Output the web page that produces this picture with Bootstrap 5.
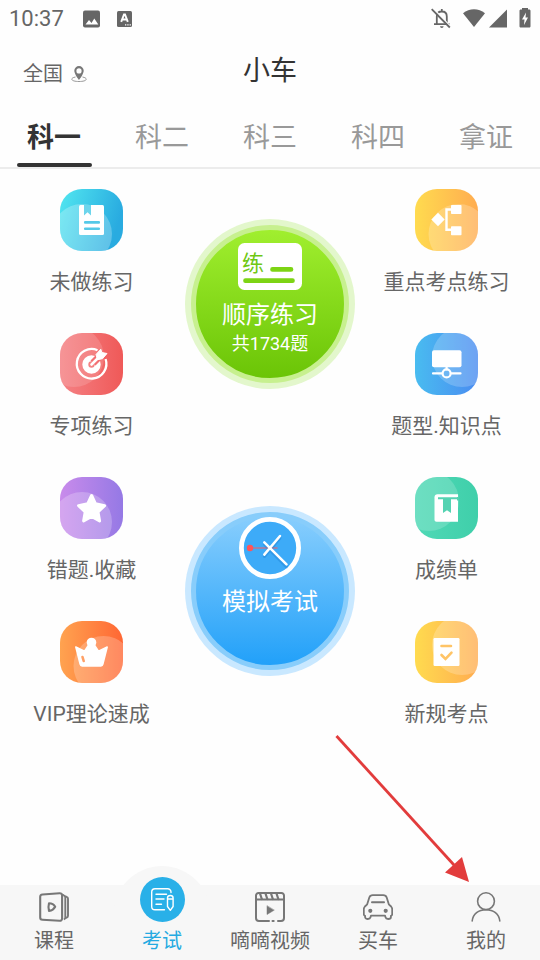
<!DOCTYPE html>
<html lang="zh-CN">
<head>
<meta charset="utf-8">
<meta name="viewport" content="width=device-width, initial-scale=1">
<title>小车</title>
<link href="https://cdn.jsdelivr.net/npm/bootstrap@5.3.0/dist/css/bootstrap.min.css" rel="stylesheet">
<style>
  body { font-family: Roboto, "Noto Sans CJK SC", sans-serif; background: #fefefe; color: #666; }
  a { color: inherit; text-decoration: none; }
  svg { display: block; flex: none; }

  .status-bar { height: 37px; padding: 0 9px; font-size: 22px; line-height: 37px; }
  .app-header { height: 69px; padding: 0 23px; }
  .app-header h1 { font-size: 27px; line-height: 64px; margin-bottom: 2px; color: #333; font-weight: 400; }
  .side { flex: 1 1 0; }
  .region { font-size: 20px; line-height: 28px; margin-top: 4px; }

  .subjects { border-bottom: 2px solid #ececec; }
  .subject { flex: 1 1 0; padding-top: 7px; font-size: 27px; line-height: 50px; color: #999; }
  .subject::after { content: ""; width: 75px; height: 4px; border-radius: 2px; }
  .subject.active { color: #333; font-weight: 700; }
  .subject.active::after { background: #333; }

  .tiles { flex: 1 1 0; gap: 36px; padding: 20px 2px 0 0; }
  .tile { gap: 16px; font-size: 21px; line-height: 30px; white-space: nowrap; }
  .rounds { gap: 117px; padding-top: 50px; }
  .round { width: 170px; height: 170px; padding: 6px; border: 0; border-radius: 50%; color: #fff; }
  .round-face { height: 100%; border: 5px solid; border-radius: 50%; background-origin: border-box; font-size: 24px; line-height: 30px; }
  .round-face small { font-size: 18px; line-height: 28px; }
  .round-green { background: #e3f7cc; }
  .round-green .round-face { border-color: #c7f08f; background-image: linear-gradient(#a2f030, #69c305); padding-top: 13px; }
  .round-green svg { margin-bottom: 10px; }
  .round-blue { background: #c9e8ff; }
  .round-blue .round-face { border-color: #88cdfb; background-image: linear-gradient(#8bcffd, #1e9ff9); }
  .round-blue svg { margin-bottom: 8px; }

  .dock { background: #f7f7f7; }
  .dock-item { flex: 1 1 0; padding: 7px 0 5px; gap: 5px; font-size: 20px; line-height: 28px; white-space: nowrap; }
  .dock-item.active { color: #25aae1; }
  .dock-item.active svg { margin-top: -15px; }
  .dock-item > * { position: relative; }
  .dock-item.active::before { content: ""; position: absolute; top: -19px; width: 96px; height: 94px; border-radius: 48px 48px 0 0; background: #f7f7f7; }
  .pointer { position: absolute; right: 71px; bottom: 78px; pointer-events: none; z-index: 2; }
</style>
<script src="https://cdn.jsdelivr.net/npm/bootstrap@5.3.0/dist/js/bootstrap.bundle.min.js" defer></script>
</head>
<body>
<div class="d-flex flex-column min-vh-100">

  <div class="status-bar d-flex align-items-center">
    <span>10:37</span>
    <svg class="ms-3" width="24" height="20" viewBox="0 0 24 20"><rect x="3" y="1.500" width="17" height="17" rx="2" fill="#666"/><path d="M5.500 15.500l3.500-4.500 2.500 3 2.800-4.500 4 6z" fill="#fff"/></svg>
    <svg class="ms-2" width="24" height="20" viewBox="0 0 24 20"><rect x="5" y="2" width="15" height="16" rx="1.500" fill="#666"/><path d="M9.200 12.800L12 5.500h1l2.800 7.300M10.200 10.500h4.500" stroke="#fff" stroke-width="1.900" fill="none"/><path d="M13 15.800h6" stroke="#fff" stroke-width="1.300" stroke-dasharray="1.300 1"/></svg>
    <div class="ms-auto d-flex align-items-center">
      <svg width="22" height="22" viewBox="0 0 22 22" fill="none" stroke="#666" stroke-width="1.800"><path d="M5.800 16V8.500c0-3 2-5 5-5s5 2 5 5V16M3 16.200h15.500M10.800 1v2.500"/><path d="M9 18.300h3.600a1.800 1.800 0 0 1-3.600 0z" fill="#666" stroke="none"/><path d="M2.200 .5L20 19" stroke="#fefefe" stroke-width="1.600"/><path d="M.7 1.200L18.800 19.500"/></svg>
      <svg class="ms-2" width="50" height="22" viewBox="0 0 50 22" fill="#666"><path d="M2 5.300C8.500 -.2 17.500 -.2 24 5.300L13 19z"/><path d="M46 1.500v18H28z"/></svg>
      <svg class="ms-2" width="12" height="22" viewBox="0 0 12 22"><path d="M3 1.500V0h6v1.500h1.200c.7 0 1.300.6 1.300 1.300v15.400c0 .7-.6 1.300-1.300 1.300H1.800c-.7 0-1.300-.6-1.300-1.300V2.800c0-.7.600-1.300 1.300-1.300z" fill="#666"/><path d="M7 4.500L3 11.500h2.500L5 17l4-7.500H6.500z" fill="#fff"/></svg>
    </div>
  </div>

  <header class="app-header d-flex align-items-center">
    <div class="side">
      <a href="#" class="region d-inline-flex align-items-center gap-2">全国
        <svg width="16" height="18" viewBox="0 0 16 18"><path d="M4.500 12C2 12.500.8 13.200.8 14.200c0 1.500 3.200 2.300 7.200 2.300s7.200-.8 7.200-2.300c0-1-1.200-1.700-3.700-2.200" fill="none" stroke="#999"/><path fill-rule="evenodd" d="M8 1a4.700 4.700 0 0 0-4.700 4.700C3.300 9 8 15 8 15s4.700-6 4.700-9.300A4.700 4.700 0 0 0 8 1zm0 2.300a2.600 2.600 0 1 1 0 5.200 2.600 2.600 0 0 1 0-5.200z" fill="#777"/></svg>
      </a>
    </div>
    <h1>小车</h1>
    <div class="side"></div>
  </header>

  <nav class="subjects d-flex" aria-label="科目">
    <a href="#" class="subject active d-flex flex-column align-items-center" aria-current="page">科一</a>
    <a href="#" class="subject d-flex flex-column align-items-center">科二</a>
    <a href="#" class="subject d-flex flex-column align-items-center">科三</a>
    <a href="#" class="subject d-flex flex-column align-items-center">科四</a>
    <a href="#" class="subject d-flex flex-column align-items-center">拿证</a>
  </nav>

  <svg width="0" height="0" class="position-absolute" aria-hidden="true">
    <defs>
      <clipPath id="tileClip"><rect width="63" height="62" rx="22"/></clipPath>
      <linearGradient id="gCyan" y2=".3"><stop stop-color="#52e7f0"/><stop offset="1" stop-color="#29abe0"/></linearGradient>
      <linearGradient id="gRed"><stop stop-color="#f58285"/><stop offset="1" stop-color="#ef5958"/></linearGradient>
      <linearGradient id="gViolet"><stop stop-color="#c98beb"/><stop offset="1" stop-color="#9579e5"/></linearGradient>
      <linearGradient id="gOrange"><stop stop-color="#ffa350"/><stop offset="1" stop-color="#ff6734"/></linearGradient>
      <linearGradient id="gYellow"><stop stop-color="#ffdb4f"/><stop offset="1" stop-color="#ffac50"/></linearGradient>
      <linearGradient id="gBlue"><stop stop-color="#49bcf0"/><stop offset="1" stop-color="#4a8cf1"/></linearGradient>
      <linearGradient id="gMint"><stop stop-color="#50d9b6"/><stop offset="1" stop-color="#3fcfaa"/></linearGradient>
    </defs>
  </svg>

  <main class="d-flex flex-grow-1 pb-5">
    <div class="tiles d-flex flex-column align-items-center">
      <a href="#" class="tile d-flex flex-column align-items-center">
        <svg width="63" height="62" viewBox="0 0 63 62"><g clip-path="url(#tileClip)"><rect width="63" height="62" fill="url(#gCyan)"/><circle cx="22" cy="45" r="30" fill="#fff" opacity=".25"/></g><rect x="19" y="16" width="25" height="30" rx="1.500" fill="#fff"/><path d="M24 16h7v10.500l-3.500-3.200-3.500 3.200z" fill="#6dd5ec"/><path d="M25.200 33.400h13.600M25.200 39.800h13.600" stroke="#55c9e8" stroke-width="2.600" stroke-linecap="round"/></svg>
        未做练习
      </a>
      <a href="#" class="tile d-flex flex-column align-items-center">
        <svg width="63" height="62" viewBox="0 0 63 62"><g clip-path="url(#tileClip)"><rect width="63" height="62" fill="url(#gRed)"/><circle cx="14" cy="24" r="30" fill="#fff" opacity=".15"/></g><g fill="none" stroke="#fff"><path d="M37.500 17.200A14.800 14.800 0 1 0 45.600 26" stroke-width="2.300"/><circle cx="31.500" cy="31.500" r="6.200" stroke-width="6"/><path d="M33 30l8-8" stroke="#f37073" stroke-width="7"/><path d="M31.500 31.500L39 24" stroke-width="2.600" stroke-linecap="round"/></g><path d="M36 21.500l4.800-5.300 1 3.300 5.200 1-4.500 5.200-5 1z" fill="#fff" stroke="#fff" stroke-linejoin="round"/></svg>
        专项练习
      </a>
      <a href="#" class="tile d-flex flex-column align-items-center">
        <svg width="63" height="62" viewBox="0 0 63 62"><g clip-path="url(#tileClip)"><rect width="63" height="62" fill="url(#gViolet)"/><circle cx="22" cy="45" r="30" fill="#fff" opacity=".23"/></g><path d="M31.600 18.500l3.900 8.300 9.100 1.800-6.600 6.300 1.600 9-8-4.400-8 4.400 1.600-9-6.600-6.300 9.100-1.800z" fill="#fff" stroke="#fff" stroke-width="3" stroke-linejoin="round"/></svg>
        错题.收藏
      </a>
      <a href="#" class="tile d-flex flex-column align-items-center">
        <svg width="63" height="62" viewBox="0 0 63 62"><g clip-path="url(#tileClip)"><rect width="63" height="62" fill="url(#gOrange)"/><circle cx="43.500" cy="45" r="30" fill="#fff" opacity=".22"/></g><circle cx="31.500" cy="21.500" r="4.800" fill="#fff"/><path d="M15.800 26l8.700 4.200 4.500-6.700h5l4.500 6.700 8.700-4.200-4.300 17c-.3 1.400-.8 1.900-2 1.900H22.100c-1.200 0-1.700-.5-2-1.900z" fill="#fff" stroke="#fff" stroke-width="1.500" stroke-linejoin="round"/><path d="M22.500 36l1.200 4" stroke="#ffa066" stroke-width="2.600" stroke-linecap="round"/></svg>
        VIP理论速成
      </a>
    </div>

    <div class="rounds d-flex flex-column">
      <button type="button" class="round round-green">
        <span class="round-face d-flex flex-column align-items-center">
          <svg width="64" height="47" viewBox="0 0 64 47"><rect width="64" height="47" rx="6.500" fill="#fff"/><text x="4" y="27.500" font-size="22" fill="#6fc814">练</text><path d="M34.500 26.400h18.500M7.500 37.700h47" stroke="#7dd414" stroke-width="4.700" stroke-linecap="round"/></svg>
          顺序练习
          <small>共1734题</small>
        </span>
      </button>
      <button type="button" class="round round-blue">
        <span class="round-face d-flex flex-column align-items-center">
          <svg width="62" height="62" viewBox="0 0 62 62"><circle cx="31" cy="31" r="28.600" fill="#3dabf8" stroke="#fff" stroke-width="4.800"/><path d="M11 31h27.500" stroke="#e8636f" stroke-width="1.100"/><circle cx="11" cy="31" r="3.200" fill="#ff5459"/><g fill="none" stroke-width="2.500" stroke-linecap="round"><path d="M41 21l-15.500 18.500M25.500 27.500L47.500 50" stroke="#1a78cc" stroke-width="3" opacity=".35"/><path d="M41 19L25.300 37.600M25.300 25.300l22.200 22" stroke="#fff"/></g></svg>
          模拟考试
        </span>
      </button>
    </div>

    <div class="tiles d-flex flex-column align-items-center">
      <a href="#" class="tile d-flex flex-column align-items-center">
        <svg width="63" height="62" viewBox="0 0 63 62"><g clip-path="url(#tileClip)"><rect width="63" height="62" fill="url(#gYellow)"/><circle cx="43.500" cy="45" r="30" fill="#fff" opacity=".22"/></g><g fill="#fff"><path d="M23 23.800l6.700 6.700-6.700 6.700-6.700-6.700z"/><rect x="36" y="16" width="10.500" height="9" rx=".8"/><rect x="36" y="37.200" width="10.500" height="9" rx=".8"/></g><path d="M37 20.500h-5.500v20.200H37" fill="none" stroke="#fff" stroke-width="2.400"/></svg>
        重点考点练习
      </a>
      <a href="#" class="tile d-flex flex-column align-items-center">
        <svg width="63" height="62" viewBox="0 0 63 62"><g clip-path="url(#tileClip)"><rect width="63" height="62" fill="url(#gBlue)"/><circle cx="47" cy="24" r="30" fill="#fff" opacity=".2"/></g><rect x="17" y="17.300" width="29.500" height="17" rx="2" fill="#fff"/><g fill="none" stroke="#fff" stroke-width="2.200"><path d="M18 40.400h9M36 40.400h9.500M31.600 34v2.500" stroke-linecap="round"/><circle cx="31.600" cy="40.400" r="4"/></g></svg>
        题型.知识点
      </a>
      <a href="#" class="tile d-flex flex-column align-items-center">
        <svg width="63" height="62" viewBox="0 0 63 62"><g clip-path="url(#tileClip)"><rect width="63" height="62" fill="url(#gMint)"/><circle cx="14" cy="24" r="30" fill="#fff" opacity=".17"/></g><path d="M22.500 17.200H43v27.600H21.500c-1.200 0-2-.8-2-2V20.200c0-1.800 1.200-3 3-3z" fill="#fff"/><path d="M23 21.300h20.200M43 20v3.500" stroke="#55d3b2" stroke-width="2"/><path d="M28 22h8v14l-4-2.800-4 2.800z" fill="#55d3b2"/></svg>
        成绩单
      </a>
      <a href="#" class="tile d-flex flex-column align-items-center">
        <svg width="63" height="62" viewBox="0 0 63 62"><g clip-path="url(#tileClip)"><rect width="63" height="62" fill="url(#gYellow)"/><circle cx="47" cy="24" r="30" fill="#fff" opacity=".22"/></g><rect x="18.500" y="17" width="26" height="28" rx="1.200" fill="#fff"/><path d="M26.500 25h9.500M26.500 34l4 4 6-6.300" fill="none" stroke="#ffc466" stroke-width="2.600" stroke-linecap="round"/></svg>
        新规考点
      </a>
    </div>
  </main>

  <nav class="dock position-relative d-flex" aria-label="主导航">
    <svg class="pointer" width="135" height="148" viewBox="0 0 135 148" aria-hidden="true"><path d="M2.500 2L120 131" stroke="#e23c3c" stroke-width="2.800"/><path d="M135 148l-24-9.500 17-15.500z" fill="#e23c3c"/></svg>

    <a href="#" class="dock-item position-relative d-flex flex-column align-items-center">
      <svg width="30" height="30" viewBox="0 0 30 30" fill="none" stroke="#777" stroke-width="2.100" stroke-linejoin="round"><path d="M3.500 2.500L20.500 1.200c1.600-.1 2.600.8 2.600 2.300v22.800c0 1.600-1 2.600-2.600 2.500L3.500 27.700C2 27.600 1.200 26.800 1.200 25.400V4.800c0-1.300.9-2.200 2.300-2.300z"/><path d="M23 2.800l1.800.4M24.800 3.500c1 .2 1.500.8 1.500 1.900v20c0 1.100-.5 1.700-1.500 2M26.500 4.500l1.200.4c.9.200 1.300.9 1.300 1.800v17c0 1-.4 1.600-1.300 1.900l-1.200.4" stroke-width="1.900"/><path d="M10 11.200c2.500 0 5 1.300 6.200 3.500-1.200 2.400-3.500 3.900-6.200 4.300-.7-2.500-.7-5.300 0-7.800z"/></svg>
      <span>课程</span>
    </a>
    <a href="#" class="dock-item active position-relative d-flex flex-column align-items-center" aria-current="page">
      <svg width="45" height="45" viewBox="0 0 45 45"><circle cx="22.500" cy="22.500" r="22.500" fill="#29b0e8"/><g fill="none" stroke="#fff" stroke-width="1.400" stroke-linecap="round" stroke-linejoin="round"><path d="M31 15.500V15a3.300 3.300 0 0 0-3.300-3.300H15a3.300 3.300 0 0 0-3.300 3.300v14.500a3.300 3.300 0 0 0 3.300 3.300h9.500"/><path d="M16 17.200h10.500M16 22h8M16 27.200h5.500"/><path d="M27.500 21c0-1.500 1-2.500 2.800-2.500s2.800 1 2.800 2.500v8.500l-2.800 3.800-2.800-3.800zM27.500 22h5.600"/></g></svg>
      <span>考试</span>
    </a>
    <a href="#" class="dock-item position-relative d-flex flex-column align-items-center">
      <svg width="30" height="30" viewBox="0 0 30 30" fill="none" stroke="#777" stroke-width="2" stroke-linecap="round"><path d="M14 29H4a3 3 0 0 1-3-3V3.500A2.500 2.500 0 0 1 3.500 1h23A2.500 2.500 0 0 1 29 3.500V26a3 3 0 0 1-3 3h-3M1 7.500h28M17.500 29h1.200"/><path d="M5 1.500l1.800 5.500M10.500 1.500L12.300 7M16 1.500L17.800 7M21.500 1.500L23.300 7" stroke-width="2.200"/><path d="M12 14v8.500l7-4.200z" fill="#777" stroke-width=".5"/></svg>
      <span>嘀嘀视频</span>
    </a>
    <a href="#" class="dock-item position-relative d-flex flex-column align-items-center">
      <svg width="30" height="30" viewBox="0 0 30 30" fill="none" stroke="#777" stroke-width="1.800" stroke-linecap="round" stroke-linejoin="round"><path d="M4.200 12.300L6.300 5.500C6.900 3.900 8 3.200 9.700 3.200h10.600c1.700 0 2.800.7 3.400 2.300l2.100 6.800 2.300 2.200c.8.900 1.100 1.700 1.100 2.800v5c0 .8-.5 1.300-1.300 1.500v1.500c0 1-1.300 1.700-2.700 1.700s-2.500-.8-2.700-1.700l-.5-1.700H8l-.5 1.700c-.2.900-1.300 1.700-2.700 1.700s-2.700-.7-2.700-1.700v-1.500c-.8-.2-1.300-.7-1.300-1.500v-5c0-1.100.3-1.900 1.100-2.800z"/><path d="M9 10.300h12" stroke-width="2"/><circle cx="7.300" cy="18.800" r="1.200" fill="#777"/><circle cx="22.700" cy="18.800" r="1.200" fill="#777"/></svg>
      <span>买车</span>
    </a>
    <a href="#" class="dock-item position-relative d-flex flex-column align-items-center">
      <svg width="30" height="30" viewBox="0 0 30 30" fill="none" stroke="#777" stroke-width="1.600" stroke-linecap="round"><circle cx="15" cy="9.200" r="8.400"/><path d="M1.200 29C2 22 7.500 17.700 15 17.700S28 22 28.800 29"/></svg>
      <span>我的</span>
    </a>
  </nav>
</div>
</body>
</html>
